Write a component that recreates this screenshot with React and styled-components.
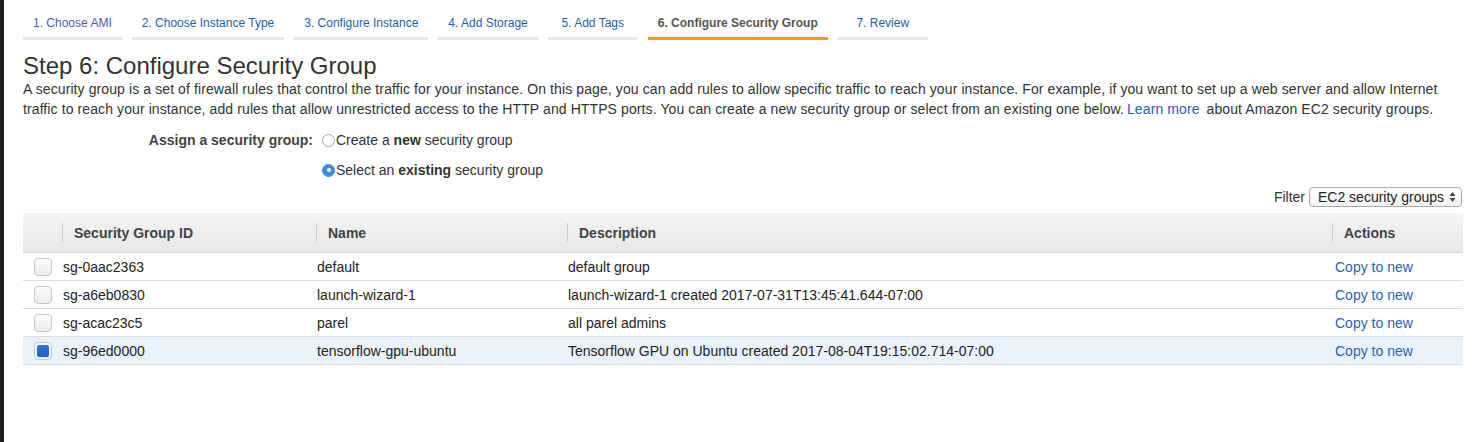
import React from "react";
import styled, { createGlobalStyle } from "styled-components";

const Global = createGlobalStyle`
  html, body { margin: 0; padding: 0; background: #fff; }
  body { font-family: "Liberation Sans", Arial, Helvetica, sans-serif; color: #333; }
`;

const Shell = styled.div`
  display: flex;
  min-height: 442px;
`;

const Strip = styled.div`
  width: 4px;
  flex: none;
  background: #1c1c1c;
`;

const Main = styled.div`
  flex: 1;
  padding: 0 13px 0 19px;
`;

const Tabs = styled.nav`
  display: flex;
  gap: 10px;
`;

const Tab = styled.a`
  display: block;
  min-width: 90px;
  box-sizing: border-box;
  text-align: center;
  padding: 16px 10px 7px;
  font-size: 12px;
  line-height: 14px;
  white-space: nowrap;
  border-bottom: 3px solid ${(p) => (p.$active ? "#f7981d" : "#e9e9e9")};
  color: ${(p) => (p.$active ? "#555" : p.$visited ? "#4f5cb0" : "#1d5fae")};
  font-weight: ${(p) => (p.$active ? "bold" : "normal")};
  text-decoration: none;
`;

const Title = styled.h1`
  margin: 13px 0 0;
  font-size: 24px;
  line-height: 26px;
  font-weight: normal;
  color: #333;
`;

const Intro = styled.p`
  margin: 0;
  font-size: 14px;
  line-height: 20px;
  letter-spacing: 0.1px;
  color: #333;
`;

const Link = styled.a`
  color: #1f63b8;
  text-decoration: none;
  margin: 0 ${(p) => (p.$spaced ? "3px" : "0")};
`;

const AssignGrid = styled.div`
  display: grid;
  grid-template-columns: 290px auto;
  column-gap: 9px;
  row-gap: 10px;
  margin-top: 11px;
  font-size: 14px;
  line-height: 20px;
`;

const AssignLabel = styled.div`
  text-align: right;
  font-weight: bold;
  color: #444;
`;

const Option = styled.label`
  grid-column: 2;
  display: flex;
  align-items: center;
  color: #333;
`;

const Radio = styled.span`
  width: 13px;
  height: 13px;
  box-sizing: border-box;
  border-radius: 50%;
  flex: none;
  margin-right: 1px;
  display: flex;
  align-items: center;
  justify-content: center;
  border: 1px solid ${(p) => (p.$on ? "#3a8ee6" : "#a9a9a9")};
  background: ${(p) => (p.$on ? "#3a8ee6" : "#fff")};
  &::after {
    content: "";
    width: 4px;
    height: 4px;
    border-radius: 50%;
    background: #fff;
    display: ${(p) => (p.$on ? "block" : "none")};
  }
`;

const FilterRow = styled.div`
  display: flex;
  justify-content: flex-end;
  align-items: center;
  gap: 4px;
  margin-top: 7px;
  padding-right: 1px;
  font-size: 14px;
  color: #333;
`;

const Select = styled.div`
  width: 153px;
  height: 20px;
  box-sizing: border-box;
  border: 1px solid #aaa;
  border-radius: 4px;
  background: linear-gradient(#fff, #f3f3f3);
  display: flex;
  align-items: center;
  justify-content: space-between;
  padding: 0 5px 0 8px;
  font-size: 14px;
  color: #222;
`;

const Table = styled.div`
  margin-top: 6px;
  font-size: 14px;
`;

const HeadRow = styled.div`
  display: grid;
  grid-template-columns: 39px 254px 251px 1fr 131px;
  height: 40px;
  background: linear-gradient(#f4f4f4, #e8e8e8);
  border-bottom: 1px solid #d6d6d6;
  box-sizing: border-box;
`;

const HeadCell = styled.div`
  display: flex;
  align-items: center;
  padding-left: 11px;
  font-weight: bold;
  color: #444;
  border-left: ${(p) => (p.$first ? "none" : "1px solid #cfcfcf")};
  margin: 10px 0;
  height: 19px;
  align-self: center;
`;

const Row = styled.div`
  display: grid;
  grid-template-columns: 39px 254px 251px 1fr 131px;
  height: 28px;
  box-sizing: border-box;
  border-bottom: 1px solid #dcdcdc;
  background: ${(p) => (p.$selected ? "#eaf2fc" : "#fff")};
  color: #222;
`;

const Cell = styled.div`
  display: flex;
  align-items: center;
  padding-left: ${(p) => (p.$pad ? p.$pad : "1px")};
  white-space: nowrap;
`;

const Check = styled.span`
  width: 18px;
  height: 18px;
  box-sizing: border-box;
  border-radius: 4px;
  border: 1px solid #c9c9c9;
  background: linear-gradient(#fbfbfb, #ececec);
  display: flex;
  align-items: center;
  justify-content: center;
  &::after {
    content: "";
    width: 12px;
    height: 12px;
    border-radius: 2px;
    background: linear-gradient(#2c7be0, #1660c4);
    display: ${(p) => (p.$on ? "block" : "none")};
  }
`;

const ActionLink = styled.a`
  color: #1f63b8;
  text-decoration: none;
  padding-left: 2px;
`;

const tabs = [
  "1. Choose AMI",
  "2. Choose Instance Type",
  "3. Configure Instance",
  "4. Add Storage",
  "5. Add Tags",
  "6. Configure Security Group",
  "7. Review",
];

const groups = [
  ["sg-0aac2363", "default", "default group", false],
  ["sg-a6eb0830", "launch-wizard-1", "launch-wizard-1 created 2017-07-31T13:45:41.644-07:00", false],
  ["sg-acac23c5", "parel", "all parel admins", false],
  ["sg-96ed0000", "tensorflow-gpu-ubuntu", "Tensorflow GPU on Ubuntu created 2017-08-04T19:15:02.714-07:00", true],
];

const Arrows = () => (
  <svg width="7" height="12" viewBox="0 0 7 12">
    <path d="M3.5 1 L6.5 5 L0.5 5 Z" fill="#444" />
    <path d="M3.5 11 L6.5 7 L0.5 7 Z" fill="#444" />
  </svg>
);

export default function App() {
  return (
    <>
      <Global />
      <Shell>
        <Strip />
        <Main>
          <Tabs>
            {tabs.map((t, i) => (
              <Tab key={t} $active={i === 5} $visited={i === 0}>
                {t}
              </Tab>
            ))}
          </Tabs>
          <Title>Step 6: Configure Security Group</Title>
          <Intro>
            A security group is a set of firewall rules that control the traffic for your instance. On this page, you can add rules to allow specific traffic to reach your instance. For example, if you want to set up a web server and allow Internet
            <br />
            traffic to reach your instance, add rules that allow unrestricted access to the HTTP and HTTPS ports. You can create a new security group or select from an existing one below.
            <Link $spaced>Learn more</Link> about Amazon EC2 security groups.
          </Intro>
          <AssignGrid>
            <AssignLabel>Assign a security group:</AssignLabel>
            <Option>
              <Radio />
              Create a&nbsp;<b>new</b>&nbsp;security group
            </Option>
            <Option>
              <Radio $on />
              Select an&nbsp;<b>existing</b>&nbsp;security group
            </Option>
          </AssignGrid>
          <FilterRow>
            Filter
            <Select>
              EC2 security groups
              <Arrows />
            </Select>
          </FilterRow>
          <Table>
            <HeadRow>
              <HeadCell $first />
              <HeadCell>Security Group ID</HeadCell>
              <HeadCell>Name</HeadCell>
              <HeadCell>Description</HeadCell>
              <HeadCell>Actions</HeadCell>
            </HeadRow>
            {groups.map(([id, name, desc, sel]) => (
              <Row key={id} $selected={sel}>
                <Cell $pad="11px">
                  <Check $on={sel} />
                </Cell>
                <Cell>{id}</Cell>
                <Cell>{name}</Cell>
                <Cell>{desc}</Cell>
                <Cell>
                  <ActionLink>Copy to new</ActionLink>
                </Cell>
              </Row>
            ))}
          </Table>
        </Main>
      </Shell>
    </>
  );
}
